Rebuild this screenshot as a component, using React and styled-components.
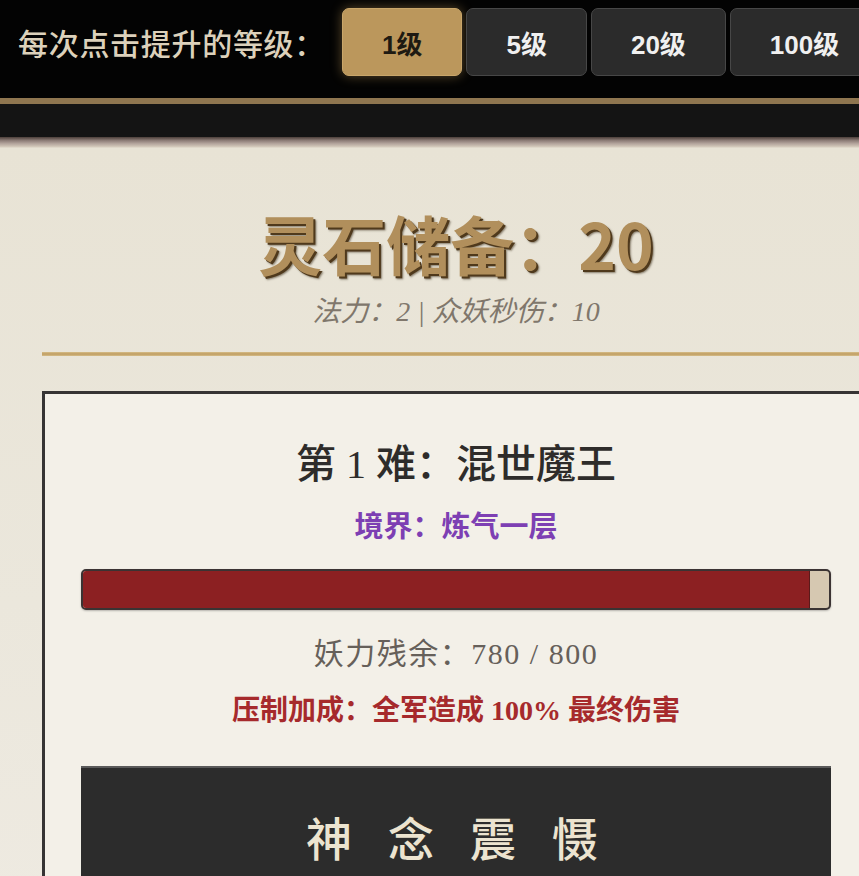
import React from "react";
import styled, { createGlobalStyle } from "styled-components";

const GlobalStyle = createGlobalStyle`
  html, body {
    margin: 0;
    padding: 0;
    background: #000;
    overflow: hidden;
  }
  body {
    font-family: "Noto Sans CJK SC", "Noto Sans", sans-serif;
  }
  * { box-sizing: border-box; }
`;

const SANS = `"Noto Sans CJK SC", "Noto Sans", sans-serif`;
const SERIF = `"Liberation Serif", "Noto Sans CJK SC", serif`;

const Page = styled.div`
  width: 912px;
  min-height: 876px;
  display: flex;
  flex-direction: column;
`;

const TopBar = styled.div`
  display: flex;
  align-items: flex-start;
  gap: 17px;
  padding: 8px 0 22px 18px;
  background: #030303;
  border-bottom: 6px solid #8f7650;
`;

const StepLabel = styled.span`
  height: 68px;
  display: flex;
  align-items: center;
  font-family: ${SANS};
  font-size: 30px;
  font-weight: 500;
  letter-spacing: 0.7px;
  color: #dcd1bb;
  white-space: nowrap;
`;

const StepGroup = styled.div`
  display: flex;
  gap: 4px;
`;

const StepButton = styled.button`
  height: 68px;
  padding: 0 39px;
  border-radius: 7px;
  font-family: "Liberation Sans", ${SANS};
  font-size: 26px;
  font-weight: 700;
  white-space: nowrap;
  cursor: pointer;
  border: 1px solid ${(p) => (p.$active ? "#c9a66a" : "#474747")};
  background: ${(p) => (p.$active ? "#bb975c" : "#2b2b2b")};
  color: ${(p) => (p.$active ? "#1e1a12" : "#f0f0f0")};
  box-shadow: ${(p) =>
    p.$active ? "0 0 12px rgba(200, 160, 90, 0.45)" : "none"};
`;

const DarkBand = styled.div`
  height: 33px;
  background: #141414;
`;

const PanelEdge = styled.div`
  height: 11px;
  background: linear-gradient(
    to bottom,
    #4c3f3a 0%,
    #8a7a74 30%,
    #b3a49c 60%,
    #cfc4b6 85%,
    #e6e0d2 100%
  );
`;

const Panel = styled.div`
  flex: 1;
  padding: 0 0 0 42px;
  background: linear-gradient(180deg, #e8e3d5 0%, #ebe7dc 60%, #eeeae1 100%);
`;

const Summary = styled.div`
  width: 828px;
  display: flex;
  flex-direction: column;
  align-items: center;
`;

const StoneTitle = styled.h1`
  margin: 56px 0 0;
  font-family: ${SANS};
  font-size: 64px;
  line-height: 76px;
  font-weight: 700;
  color: #b18f5c;
  text-shadow: 2px 2px 0 #4f391c, 3px 3px 2px rgba(40, 25, 5, 0.5);
`;

const StatsLine = styled.div`
  margin-top: 14px;
  font-family: ${SERIF};
  font-style: italic;
  font-size: 28px;
  line-height: 36px;
  color: #80776c;
`;

const GoldRule = styled.div`
  width: 828px;
  height: 4px;
  margin-top: 22px;
  background: linear-gradient(to bottom, #d6bd88, #bf9d62, #d6bd88);
`;

const BossCard = styled.section`
  width: 828px;
  margin-top: 35px;
  padding: 46px 36px 0;
  background: #f3f0e8;
  border: 3px solid #363434;
  border-bottom: none;
  display: flex;
  flex-direction: column;
  align-items: center;
`;

const BossName = styled.h2`
  margin: 0;
  font-family: ${SERIF};
  font-size: 40px;
  line-height: 50px;
  font-weight: 500;
  color: #2e2c2a;
`;

const Realm = styled.div`
  margin-top: 16px;
  font-family: ${SANS};
  font-size: 29px;
  line-height: 36px;
  font-weight: 700;
  color: #7d3fb3;
`;

const HealthTrack = styled.div`
  width: 100%;
  height: 41px;
  margin-top: 27px;
  border: 2px solid #3b3333;
  border-radius: 5px;
  background: #d6c8b1;
  overflow: hidden;
  box-shadow: 0 1px 2px rgba(0, 0, 0, 0.25);
`;

const HealthFill = styled.div`
  height: 100%;
  background: #8c2022;
  border-right: 1px solid #5a1a1a;
`;

const Remaining = styled.div`
  margin-top: 26px;
  font-family: ${SERIF};
  font-size: 30px;
  line-height: 36px;
  letter-spacing: 1.5px;
  color: #66605a;
`;

const Bonus = styled.div`
  margin-top: 21px;
  font-family: ${SERIF};
  font-size: 28px;
  line-height: 36px;
  font-weight: 700;
  color: #a62a2c;
`;

const StrikeButton = styled.button`
  width: 100%;
  margin-top: 37px;
  padding: 40px 0 44px 28px;
  border: none;
  border-top: 2px solid #5a5a5a;
  background: #2c2c2c;
  font-family: ${SANS};
  font-size: 46px;
  line-height: 56px;
  font-weight: 500;
  letter-spacing: 36px;
  color: #ece4d0;
  cursor: pointer;
`;

const steps = ["1级", "5级", "20级", "100级"];

export default function App() {
  const hp = 780;
  const maxHp = 800;
  return (
    <>
      <GlobalStyle />
      <Page>
        <TopBar>
          <StepLabel>每次点击提升的等级：</StepLabel>
          <StepGroup>
            {steps.map((s, i) => (
              <StepButton key={s} $active={i === 0}>
                {s}
              </StepButton>
            ))}
          </StepGroup>
        </TopBar>
        <DarkBand />
        <PanelEdge />
        <Panel>
          <Summary>
            <StoneTitle>灵石储备：20</StoneTitle>
            <StatsLine>法力：2 | 众妖秒伤：10</StatsLine>
            <GoldRule />
            <BossCard>
              <BossName>第 1 难：混世魔王</BossName>
              <Realm>境界：炼气一层</Realm>
              <HealthTrack>
                <HealthFill style={{ width: `${(hp / maxHp) * 100}%` }} />
              </HealthTrack>
              <Remaining>
                妖力残余：{hp} / {maxHp}
              </Remaining>
              <Bonus>压制加成：全军造成 100% 最终伤害</Bonus>
              <StrikeButton>神念震慑</StrikeButton>
            </BossCard>
          </Summary>
        </Panel>
      </Page>
    </>
  );
}
